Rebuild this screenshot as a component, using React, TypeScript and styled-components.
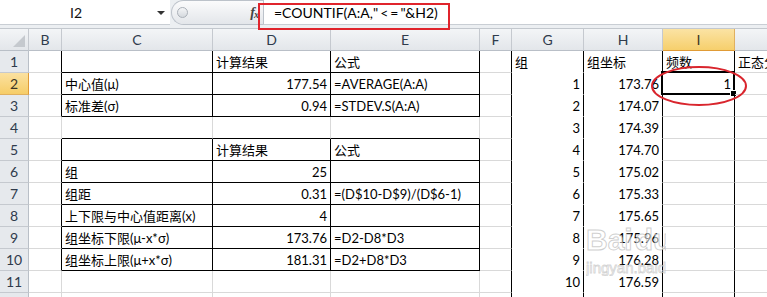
import React from "react";
import styled, { createGlobalStyle } from "styled-components";

const GlobalStyle = createGlobalStyle`
  html, body {
    margin: 0;
    padding: 0;
    background: #fff;
    overflow: hidden;
  }
`;

const COLS = ["B", "C", "D", "E", "F", "G", "H", "I", "J"];
const TABLE_ROWS = [1, 2, 3, 5, 6, 7, 8, 9, 10];

const sheetData: Record<number, Record<string, string>> = {
  1: { D: "计算结果", E: "公式", G: "组", H: "组坐标", I: "频数", J: "正态分布" },
  2: { C: "中心值(μ)", D: "177.54", E: "=AVERAGE(A:A)", G: "1", H: "173.76", I: "1" },
  3: { C: "标准差(σ)", D: "0.94", E: "=STDEV.S(A:A)", G: "2", H: "174.07" },
  4: { G: "3", H: "174.39" },
  5: { D: "计算结果", E: "公式", G: "4", H: "174.70" },
  6: { C: "组", D: "25", G: "5", H: "175.02" },
  7: { C: "组距", D: "0.31", E: "=(D$10-D$9)/(D$6-1)", G: "6", H: "175.33" },
  8: { C: "上下限与中心值距离(x)", D: "4", G: "7", H: "175.65" },
  9: { C: "组坐标下限(μ-x*σ)", D: "173.76", E: "=D2-D8*D3", G: "8", H: "175.96" },
  10: { C: "组坐标上限(μ+x*σ)", D: "181.31", E: "=D2+D8*D3", G: "9", H: "176.28" },
  11: { G: "10", H: "176.59" },
  12: {},
};

const Sheet = styled.div`
  position: relative;
  width: 767px;
  height: 297px;
  overflow: hidden;
  background: #fff;
  font-family: Lato, "Noto Sans CJK SC", sans-serif;
`;

const FormulaBar = styled.div`
  display: flex;
  box-sizing: border-box;
  height: 29px;
  background: #eceff2;
  border-bottom: 1px solid #c3c8ce;
`;

const NameBox = styled.div`
  position: relative;
  box-sizing: border-box;
  width: 170px;
  height: 25px;
  padding-right: 18px;
  display: flex;
  align-items: center;
  justify-content: center;
  background: #fff;
  border-bottom: 1px solid #c9ced4;
  font-size: 14px;
  color: #111;
`;

const DropArrow = styled.span`
  position: absolute;
  right: 5px;
  top: 11px;
  border-left: 4px solid transparent;
  border-right: 4px solid transparent;
  border-top: 4px solid #333;
`;

const Pill = styled.div`
  box-sizing: border-box;
  width: 92px;
  height: 25px;
  margin-left: 1px;
  display: flex;
  align-items: center;
  justify-content: space-between;
  padding: 0 5px 0 5px;
  border: 1px solid #bcc2ca;
  border-right: 0;
  border-radius: 13px 0 0 13px;
  background: linear-gradient(#fbfbfc, #e3e6ea);
`;

const Knob = styled.span`
  width: 9px;
  height: 9px;
  border-radius: 50%;
  border: 1px solid #aab0b8;
  background: linear-gradient(#f4f5f7, #d5d9de);
`;

const FxLabel = styled.span`
  font-family: "Liberation Serif", serif;
  font-style: italic;
  font-weight: bold;
  font-size: 14px;
  color: #444;
  letter-spacing: -1px;

  sub {
    font-size: 10px;
    vertical-align: -1px;
  }
`;

const FormulaInput = styled.div`
  flex: 1;
  box-sizing: border-box;
  height: 25px;
  padding-left: 10px;
  display: flex;
  align-items: center;
  background: #fff;
  border-left: 1px solid #bcc2ca;
  border-bottom: 1px solid #c9ced4;
  font-size: 14px;
  color: #000;
  white-space: nowrap;
`;

const Spaced = styled.span`
  letter-spacing: 2px;
`;

const RedBox = styled.div`
  position: absolute;
  left: 258px;
  top: 3px;
  width: 192px;
  height: 27px;
  box-sizing: border-box;
  border: 2px solid #e0242c;
  pointer-events: none;
`;

const Grid = styled.div`
  display: grid;
  grid-template-columns: 29px 33px 151px 118px 149px 32px 72px 79px 72px 80px;
  grid-auto-rows: 22px;
`;

const Corner = styled.div`
  position: relative;
  box-sizing: border-box;
  background: linear-gradient(#f3f5f7, #e3e6ea);
  border-right: 1px solid #c5c9cf;
  border-bottom: 1px solid #b9bfc7;

  &::after {
    content: "";
    position: absolute;
    right: 3px;
    bottom: 3px;
    border-left: 12px solid transparent;
    border-bottom: 12px solid #c5c9ce;
  }
`;

const ColHead = styled.div<{ $active?: boolean }>`
  box-sizing: border-box;
  display: flex;
  align-items: center;
  justify-content: center;
  font-size: 14px;
  color: ${p => (p.$active ? "#3b3526" : "#2f3b4c")};
  background: ${p =>
    p.$active ? "linear-gradient(#fbe3a4, #f6cf6c)" : "linear-gradient(#f3f5f7, #e3e6ea)"};
  border-right: 1px solid ${p => (p.$active ? "#e0b060" : "#c5c9cf")};
  border-bottom: 1px solid ${p => (p.$active ? "#e09b36" : "#b9bfc7")};
`;

const RowHead = styled.div<{ $active?: boolean }>`
  box-sizing: border-box;
  display: flex;
  align-items: center;
  justify-content: center;
  font-size: 14px;
  color: ${p => (p.$active ? "#3b3526" : "#2f3b4c")};
  background: ${p => (p.$active ? "linear-gradient(#fbe1a0, #f6cd68)" : "#e6e9ed")};
  border-right: 1px solid ${p => (p.$active ? "#e09b36" : "#b9bfc7")};
  border-bottom: 1px solid ${p => (p.$active ? "#e0b060" : "#c5c9cf")};
`;

const Cell = styled.div<{ $rb: boolean; $bb: boolean; $clear: boolean; $right: boolean }>`
  position: relative;
  box-sizing: border-box;
  display: flex;
  align-items: center;
  justify-content: ${p => (p.$right ? "flex-end" : "flex-start")};
  padding: 0 3px 0 3px;
  font-size: 13px;
  line-height: 16px;
  color: #000;
  white-space: nowrap;
  border-right: 1px solid ${p => (p.$rb ? "#000" : "#d9d9d9")};
  border-bottom: 1px solid ${p => (p.$bb ? "#000" : p.$clear ? "#fff" : "#d9d9d9")};
`;

const Selection = styled.div`
  position: absolute;
  left: -2px;
  top: -2px;
  right: -1px;
  bottom: -1px;
  border: 2px solid #000;
  pointer-events: none;

  &::after {
    content: "";
    position: absolute;
    right: -4px;
    bottom: -4px;
    width: 5px;
    height: 5px;
    background: #000;
    border: 1px solid #fff;
  }
`;

const Ellipse = styled.svg`
  position: absolute;
  left: 649px;
  top: 63px;
  pointer-events: none;
`;

const Watermark = styled.div`
  position: absolute;
  left: 586px;
  top: 224px;
  width: 80px;
  overflow: hidden;
  pointer-events: none;
  font-family: "Liberation Sans", sans-serif;
  white-space: nowrap;
`;

const WmLogo = styled.div`
  display: flex;
  align-items: center;
  font-size: 30px;
  font-weight: bold;
  line-height: 32px;
  color: rgba(255, 255, 255, 0.55);
  -webkit-text-stroke: 1px rgba(175, 175, 175, 0.6);
`;

const WmSub = styled.div`
  margin-top: 4px;
  font-size: 15px;
  line-height: 16px;
  color: rgba(255, 255, 255, 0.5);
  -webkit-text-stroke: 0.8px rgba(175, 175, 175, 0.55);
`;

const Paw = () => (
  <svg width="22" height="24" viewBox="0 0 22 24" style={{ margin: "0 1px" }}>
    <g fill="rgba(255,255,255,0.5)" stroke="rgba(175,175,175,0.6)" strokeWidth="1">
      <ellipse cx="4" cy="9" rx="2.6" ry="3.4" />
      <ellipse cx="9" cy="4" rx="2.6" ry="3.4" />
      <ellipse cx="15" cy="4" rx="2.6" ry="3.4" />
      <ellipse cx="19" cy="10" rx="2.4" ry="3.2" />
      <path d="M11 11c-4 0-7 6-6 9s4 2 6 2 5 1 6-2-2-9-6-9z" />
    </g>
  </svg>
);

const isNumber = (v: string) => /^-?\d+(\.\d+)?$/.test(v);

const rightBlack = (col: string, row: number) =>
  (["B", "C", "D", "E"].includes(col) && TABLE_ROWS.includes(row)) ||
  ["F", "G", "H", "I"].includes(col);

const bottomBlack = (col: string, row: number) =>
  ["C", "D", "E"].includes(col) && row >= 1 && row <= 10;

export default function App() {
  const rowNums = Object.keys(sheetData).map(Number);

  return (
    <Sheet>
      <GlobalStyle />
      <FormulaBar>
        <NameBox>
          I2
          <DropArrow />
        </NameBox>
        <Pill>
          <Knob />
          <FxLabel>
            f<sub>x</sub>
          </FxLabel>
        </Pill>
        <FormulaInput>
          =COUNTIF(A:A,<Spaced>"&lt;=</Spaced>"&amp;H2)
        </FormulaInput>
      </FormulaBar>
      <RedBox />

      <Grid>
        <Corner />
        {COLS.map(c => (
          <ColHead key={c} $active={c === "I"}>
            {c}
          </ColHead>
        ))}
        {rowNums.map(r => (
          <React.Fragment key={r}>
            <RowHead $active={r === 2}>{r}</RowHead>
            {COLS.map(c => {
              const v = sheetData[r][c] ?? "";
              return (
                <Cell
                  key={c}
                  $rb={rightBlack(c, r)}
                  $bb={bottomBlack(c, r)}
                  $clear={c === "G" || c === "H"}
                  $right={isNumber(v)}
                >
                  {v}
                  {r === 2 && c === "I" ? <Selection /> : null}
                </Cell>
              );
            })}
          </React.Fragment>
        ))}
      </Grid>

      <Ellipse width="100" height="46" viewBox="0 0 100 46">
        <ellipse cx="50" cy="23" rx="47" ry="19" fill="none" stroke="#d9252d" strokeWidth="2" />
      </Ellipse>

      <Watermark>
        <WmLogo>
          Bai
          <Paw />
          du
        </WmLogo>
        <WmSub>jingyan.baidu.com</WmSub>
      </Watermark>
    </Sheet>
  );
}
